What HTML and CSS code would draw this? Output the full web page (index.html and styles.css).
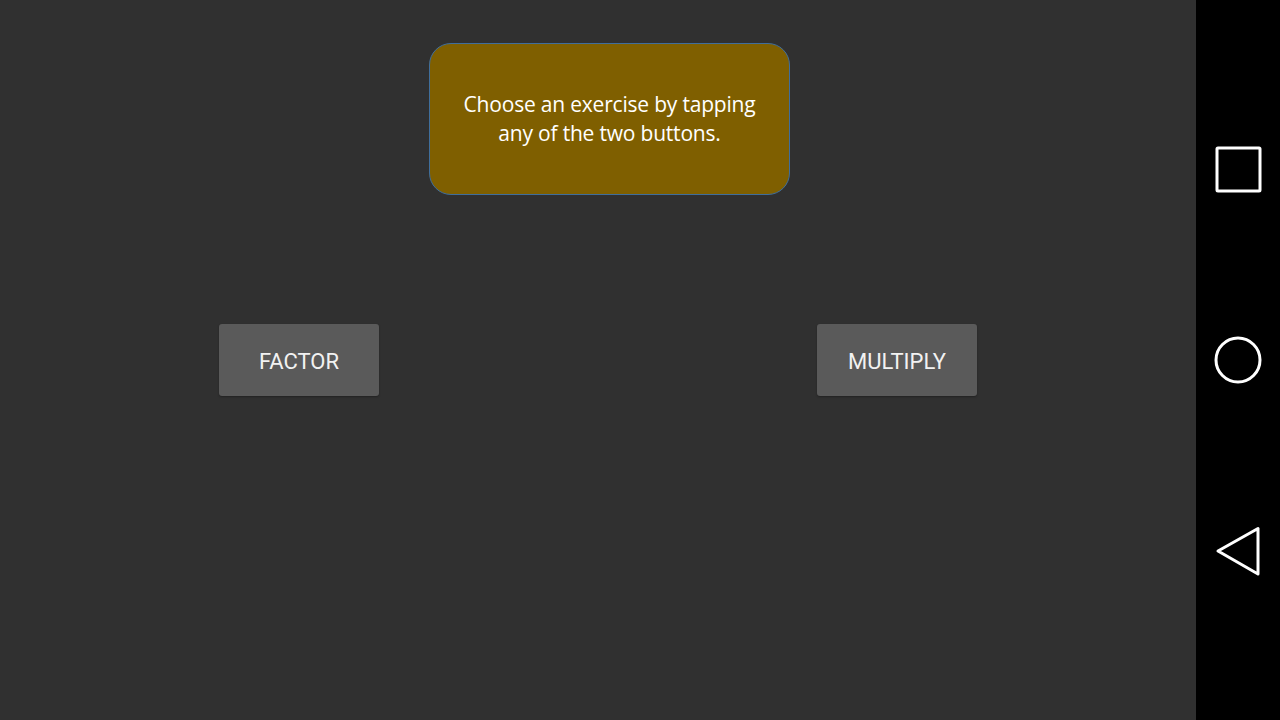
FILE: index.html
```html
<!DOCTYPE html>
<html>
<head>
<meta charset="utf-8">
<link rel="stylesheet" href="styles.css">
</head>
<body>
<div class="screen">
  <main class="content">
    <div class="bubble">
      <p class="bubble-text">Choose an exercise by tapping any of the two buttons.</p>
    </div>
    <div class="buttons">
      <button class="btn">FACTOR</button>
      <button class="btn">MULTIPLY</button>
    </div>
  </main>
  <nav class="navbar">
    <svg class="nav-icon" width="50" height="50" viewBox="0 0 50 50">
      <rect x="4" y="4" width="43" height="43" rx="1" fill="none" stroke="#fff" stroke-width="3"/>
    </svg>
    <svg class="nav-icon" width="50" height="50" viewBox="0 0 50 50">
      <circle cx="25" cy="25" r="22" fill="none" stroke="#fff" stroke-width="3"/>
    </svg>
    <svg class="nav-icon" width="50" height="50" viewBox="0 0 50 50">
      <path d="M45 2.5 L45 48 L5 25 Z" fill="none" stroke="#fff" stroke-width="3" stroke-linejoin="round"/>
    </svg>
  </nav>
</div>
</body>
</html>
```

FILE: styles.css
```css
html, body {
  margin: 0;
  padding: 0;
  background: #303030;
}

.screen {
  display: flex;
  width: 1280px;
  height: 720px;
}

.content {
  flex: 0 0 1196px;
  display: flex;
  flex-direction: column;
  padding-top: 43px;
  box-sizing: border-box;
  background: #303030;
}

.bubble {
  margin-left: 429px;
  width: 361px;
  height: 152px;
  box-sizing: border-box;
  background: #7f5f00;
  border: 1px solid #3f6e9c;
  border-radius: 22px;
  display: flex;
  align-items: center;
  justify-content: center;
  padding: 0 30px;
}

.bubble-text {
  margin: 0;
  color: #ffffff;
  font-family: "Open Sans", "Lato", sans-serif;
  font-size: 21px;
  line-height: 29px;
  text-align: center;
  letter-spacing: -0.2px;
}

.buttons {
  display: flex;
  gap: 438px;
  margin-top: 129px;
  padding-left: 219px;
}

.btn {
  width: 160px;
  height: 72px;
  border: none;
  border-radius: 3px;
  background: #5a5a5a;
  color: #f2f2f2;
  font-family: Roboto, "Noto Sans", sans-serif;
  font-size: 22px;
  padding: 3px 0 0;
  box-shadow: 0 1px 2px rgba(0,0,0,0.3);
}

.navbar {
  flex: 0 0 84px;
  background: #000;
  display: flex;
  flex-direction: column;
  align-items: center;
  padding-top: 144px;
  gap: 141px;
  box-sizing: border-box;
}

.nav-icon {
  display: block;
}
```
